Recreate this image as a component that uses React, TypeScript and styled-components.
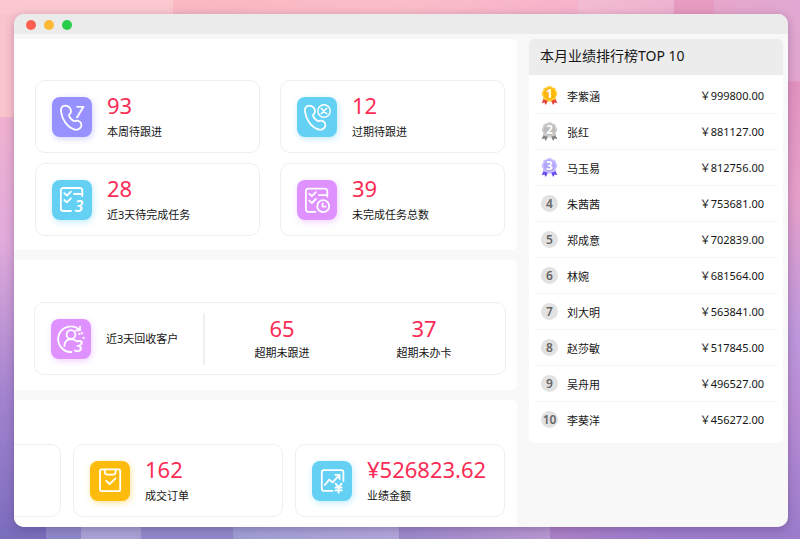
import React from "react";
import styled, { createGlobalStyle } from "styled-components";

const GlobalStyle = createGlobalStyle`
  * { box-sizing: border-box; }
  body {
    margin: 0;
    font-family: "Noto Sans", "Noto Sans CJK SC", sans-serif;
    color: #151515;
  }
  h2, p, ol, dl, dd, dt { margin: 0; padding: 0; font-weight: 400; }
`;

const Backdrop = styled.div`
  height: 100vh;
  min-height: 539px;
  display: flex;
  padding: 14px 12px 12px 14px;
  background:
    linear-gradient(90deg, #fbc8d0 0 21.6%, #f9b8c2 21.6%, #fabdc8 50%, #f6b3cb 72.2%, #f3bdd1 72.3%, #eeb2cf 84.2%, #e79bc0 84.3% 89.2%, #e6a6cb 89.3%, #e0a8d2) top / 100% 14px no-repeat,
    linear-gradient(90deg, #796ebc 0 5.7%, #8d88c9 5.8% 10.1%, #a9a2d6 10.2% 17.6%, #9088c8 17.7% 29.1%, #9e9ed3 29.2%, #b2a6da 49.8%, #9a88ca 49.9%, #b898d0 68.7%, #ab80c5 68.8%, #9d7dcc 82%, #9a7ccb) bottom / 100% 12px no-repeat,
    linear-gradient(180deg, #fac4cd 0 21.7%, #efb1cf 21.8%, #e0aadb 45%, #a283cf 74%, #7b6dbd) left / 50% 100% no-repeat,
    linear-gradient(180deg, #e0a8d2 0, #e2a6ce 15%, #e293c0 15.2%, #e5a0ca 37%, #bd98dc 62%, #b88cd4 76%, #9a7ccb) right / 50% 100% no-repeat;
`;

const Window = styled.main`
  flex: 1;
  min-width: 0;
  display: flex;
  flex-direction: column;
  overflow: hidden;
  border-radius: 10px;
  background: #f8f8f8;
  box-shadow: 0 2px 10px rgba(60, 30, 80, 0.3);
`;

const TitleBar = styled.header`
  flex: none;
  height: 20px;
  display: flex;
  align-items: center;
  gap: 8px;
  padding: 2px 12px 0;
  background: #ebebeb;
`;

const WindowDot = styled.button<{ $color: string }>`
  width: 10px;
  height: 10px;
  padding: 0;
  border: 0;
  border-radius: 50%;
  background: ${(p) => p.$color};
`;

const Content = styled.div`
  flex: 1;
  min-height: 0;
  display: flex;
  align-items: stretch;
  gap: 12px;
  padding: 5px 5px 0 0;
`;

const Sections = styled.div`
  flex: 1;
  min-width: 0;
  display: flex;
  flex-direction: column;
  gap: 10px;
`;

const Section = styled.section<{ $padding: string; $grow?: boolean }>`
  flex: ${(p) => (p.$grow ? "1" : "none")};
  padding: ${(p) => p.$padding};
  overflow: hidden;
  border-radius: 0 5px ${(p) => (p.$grow ? "0" : "5px")} 0;
  background: #fff;
`;

const CardGrid = styled.div`
  display: grid;
  grid-template-columns: 1fr 1fr;
  gap: 10px 20px;
`;

const CardStrip = styled.div`
  display: flex;
  justify-content: flex-end;
  gap: 12px;
`;

const Card = styled.article<{ $fixed?: boolean }>`
  ${(p) => (p.$fixed ? "flex: 0 0 210px;" : "")}
  height: 73px;
  display: flex;
  align-items: center;
  gap: 15px;
  padding: 0 0 0 16px;
  border: 1px solid #eeeeee;
  border-radius: 10px;
  background: #fff;
`;

const Tile = styled.span<{ $color: string }>`
  flex: none;
  width: 40px;
  height: 40px;
  border-radius: 8px;
  background: ${(p) => p.$color};
  box-shadow: 1px 2px 6px ${(p) => p.$color}66;
`;

const Glyph = styled.svg`
  display: block;
  width: 40px;
  height: 40px;
  fill: none;
  stroke: #fff;
  stroke-width: 1.8;
  stroke-linecap: round;
  stroke-linejoin: round;
  text {
    fill: #fff;
    stroke: none;
    font-family: "Noto Sans", sans-serif;
  }
`;

const Metric = styled.dl<{ $centered?: boolean }>`
  display: flex;
  flex-direction: column-reverse;
  ${(p) => (p.$centered ? "flex: 1; align-items: center;" : "gap: 2px;")}
`;

const Value = styled.dd`
  font-size: 22px;
  line-height: 28px;
  color: #fb2c55;
`;

const Label = styled.dt`
  font-size: 11px;
  line-height: 22px;
  white-space: nowrap;
`;

const RecycleLabel = styled.h2`
  flex: none;
  width: 97px;
  font-size: 11px;
  line-height: 16px;
`;

const RecycleMetrics = styled.div`
  flex: 1;
  display: flex;
  align-items: center;
  height: 52px;
  margin-left: -15px;
  padding: 0 10px 0 6px;
  border-left: 2px solid #f0f0f0;
`;

const Ranking = styled.aside`
  flex: none;
  align-self: flex-start;
  width: 254px;
  overflow: hidden;
  border-radius: 5px;
  background: #fff;
`;

const RankingTitle = styled.h2`
  padding: 0 11px;
  font-size: 14px;
  line-height: 34px;
  height: 36px;
  background: #ececec;
`;

const RankingList = styled.ol`
  list-style: none;
  padding: 3px 5px 5px 6px;
`;

const RankingRow = styled.li`
  height: 36px;
  display: flex;
  align-items: center;
  padding: 0 14px 0 6px;
  border-bottom: 1px solid #f5f5f5;
  font-size: 11px;
  &:last-child { border-bottom-color: transparent; }
`;

const RankBadge = styled.span`
  flex: none;
  width: 17px;
  height: 17px;
  border-radius: 50%;
  background: #e2e2e2;
  color: #666;
  font-size: 12px;
  font-weight: 600;
  line-height: 17px;
  text-align: center;
`;

const Medal = styled.svg`
  flex: none;
  width: 17px;
  height: 19px;
`;

const Person = styled.span`
  flex: 1;
  padding-left: 9px;
`;

const Amount = styled.span`
  padding-bottom: 2px;
`;

const CHECKS = "M12.3 13.2l2.6 2.4 4-4M12.3 20l2.6 2.4 4-4";
const HANDSET =
  "M13.2 8.6C10.2 8.6 8.6 10.8 9 14.5C9.8 21.5 14.6 29.6 21.5 32.2C24.8 33.4 28 32.4 29.2 29.4C30.2 26.6 28.2 24.4 25.6 23.6C24 23.2 23 24.6 21.8 24C19.4 22.8 17.6 20.4 17 18.4C16.8 17.2 18.8 16.6 19 14.8C19.2 11.4 16.6 8.6 13.2 8.6Z";

const WeekCallGlyph = () => (
  <Glyph viewBox="0 0 40 40" aria-hidden="true">
    <path d={HANDSET} />
    <text x="22.5" y="20.6" fontSize="17" fontStyle="italic" fontWeight="500">7</text>
  </Glyph>
);

const OverdueCallGlyph = () => (
  <Glyph viewBox="0 0 40 40" aria-hidden="true">
    <path d={HANDSET} transform="translate(-1 0)" />
    <circle cx="27" cy="14" r="6.2" strokeWidth="1.4" />
    <path d="M24.2 11.2l5.6 5.6M29.8 11.2l-5.6 5.6" strokeWidth="1.5" />
  </Glyph>
);

const TaskGlyph = () => (
  <Glyph viewBox="0 0 40 40" aria-hidden="true">
    <path d="M30.3 16V10.4A2.4 2.4 0 0 0 27.9 8H11.3A2.4 2.4 0 0 0 8.9 10.4V28.6A2.4 2.4 0 0 0 11.3 31H19" />
    <path d={CHECKS + "M22 14h7.5"} />
    <text x="22.5" y="31.5" fontSize="16" fontStyle="italic" fontWeight="600">3</text>
  </Glyph>
);

const TaskClockGlyph = () => (
  <Glyph viewBox="0 0 40 40" aria-hidden="true">
    <path d="M30.3 16.5V11A2.4 2.4 0 0 0 27.9 8.6H11.3A2.4 2.4 0 0 0 8.9 11V29.4A2.4 2.4 0 0 0 11.3 31.8H18.5" />
    <path d={CHECKS + "M22 14.5h7.5"} transform="translate(0 .6)" />
    <circle cx="26.2" cy="26.2" r="6" />
    <path d="M25.6 23.4v3.3h3" />
  </Glyph>
);

const CustomerGlyph = () => (
  <Glyph viewBox="0 0 40 40" aria-hidden="true">
    <path d="M20.5 33A12.8 12.8 0 1 1 28.2 10.4" />
    <path d="M29 7.6v3.8h-4" />
    <circle cx="20" cy="15.6" r="4.4" />
    <path d="M13.4 27C13.6 22.6 16.4 20.3 20 20.2C22 20.2 23.6 20.8 24.8 21.8" />
    <path d="M31 14.2v.1M32.6 18.8v.1M28.4 14.8v.1" strokeWidth="2.2" />
    <text x="23" y="32.6" fontSize="16" fontStyle="italic" fontWeight="600">3</text>
  </Glyph>
);

const OrderGlyph = () => (
  <Glyph viewBox="0 0 40 40" aria-hidden="true">
    <rect x="10" y="8.4" width="20.2" height="21.8" rx="1.6" />
    <path d="M14.8 8.6v2.6a2.4 2.4 0 0 0 2.4 2.4h6a2.4 2.4 0 0 0 2.4-2.4V8.6" />
    <path d="M16.2 19.8l3.4 3.2 6-5.6" />
  </Glyph>
);

const RevenueGlyph = () => (
  <Glyph viewBox="0 0 40 40" aria-hidden="true">
    <path d="M31.4 20V11.2A2 2 0 0 0 29.4 9.2H11.8A2 2 0 0 0 9.8 11.2V27.8A2 2 0 0 0 11.8 29.8H20.5" />
    <path d="M12.8 24l4.4-5.4 3.4 2.8 6.6-7.2M23.4 13.8h4.2v4.2" />
    <path d="M23.6 22.6l3 3.8 3-3.8M26.6 26.4v5.4M23.4 26.6h6.4M23.4 29.4h6.4" />
  </Glyph>
);

const MEDAL_COLORS = [
  { edge: "#ffcb2e", face: "#fdb70c", ribbon: "#e5453c" },
  { edge: "#cfcfcf", face: "#bcbcbc", ribbon: "#858585" },
  { edge: "#c6bdff", face: "#b0a4fc", ribbon: "#6a4df0" },
];
const SCALLOPS = Array.from({ length: 8 }, (_, i) => (i * Math.PI) / 4);

const RankMedal = ({ rank }: { rank: number }) => {
  const c = MEDAL_COLORS[rank - 1];
  return (
    <Medal viewBox="0 0 17 19" role="img" aria-label={`${rank}`}>
      <path d="M3.2 11.5L0.6 17.2L3.4 16.6L4.8 19L7.6 13.5Z M13.8 11.5L16.4 17.2L13.6 16.6L12.2 19L9.4 13.5Z" fill={c.ribbon} />
      {SCALLOPS.map((a) => (
        <circle key={a} cx={8.5 + 4.6 * Math.cos(a)} cy={7.8 + 4.6 * Math.sin(a)} r="3.1" fill={c.edge} />
      ))}
      <circle cx="8.5" cy="7.8" r="5.8" fill={c.face} />
      <text x="8.5" y="12" textAnchor="middle" fontSize="12" fontWeight="700" fill="#fff">{rank}</text>
    </Medal>
  );
};

type MetricCardProps = { color: string; glyph: React.ReactNode; value: string; label: string; fixed?: boolean };

const MetricCard = ({ color, glyph, value, label, fixed }: MetricCardProps) => (
  <Card $fixed={fixed}>
    <Tile $color={color}>{glyph}</Tile>
    <Metric>
      <Label>{label}</Label>
      <Value>{value}</Value>
    </Metric>
  </Card>
);

const PEOPLE: [string, string][] = [
  ["李紫涵", "999800.00"],
  ["张红", "881127.00"],
  ["马玉易", "812756.00"],
  ["朱茜茜", "753681.00"],
  ["郑成意", "702839.00"],
  ["林婉", "681564.00"],
  ["刘大明", "563841.00"],
  ["赵莎敏", "517845.00"],
  ["吴舟用", "496527.00"],
  ["李葵洋", "456272.00"],
];

const VIOLET = "#9791ff";
const SKY = "#63d0f4";
const ORCHID = "#df91ff";
const AMBER = "#fdbc0c";

export default function App() {
  return (
    <>
      <GlobalStyle />
      <Backdrop lang="zh-CN">
        <Window>
          <TitleBar>
            <WindowDot $color="#fc5f50" aria-label="关闭" />
            <WindowDot $color="#fdb934" aria-label="最小化" />
            <WindowDot $color="#29cd4a" aria-label="最大化" />
          </TitleBar>
          <Content>
            <Sections>
              <Section $padding="41px 12px 14px 21px">
                <CardGrid>
                  <MetricCard color={VIOLET} glyph={<WeekCallGlyph />} value="93" label="本周待跟进" />
                  <MetricCard color={SKY} glyph={<OverdueCallGlyph />} value="12" label="过期待跟进" />
                  <MetricCard color={SKY} glyph={<TaskGlyph />} value="28" label="近3天待完成任务" />
                  <MetricCard color={ORCHID} glyph={<TaskClockGlyph />} value="39" label="未完成任务总数" />
                </CardGrid>
              </Section>
              <Section $padding="42px 11px 15px 20px">
                <Card>
                  <Tile $color={ORCHID}><CustomerGlyph /></Tile>
                  <RecycleLabel>近3天回收客户</RecycleLabel>
                  <RecycleMetrics>
                    <Metric $centered>
                      <Label>超期未跟进</Label>
                      <Value>65</Value>
                    </Metric>
                    <Metric $centered>
                      <Label>超期未办卡</Label>
                      <Value>37</Value>
                    </Metric>
                  </RecycleMetrics>
                </Card>
              </Section>
              <Section $padding="44px 12px 10px 20px" $grow>
                <CardStrip>
                  <Card $fixed />
                  <MetricCard fixed color={AMBER} glyph={<OrderGlyph />} value="162" label="成交订单" />
                  <MetricCard fixed color={SKY} glyph={<RevenueGlyph />} value="¥526823.62" label="业绩金额" />
                </CardStrip>
              </Section>
            </Sections>
            <Ranking>
              <RankingTitle>本月业绩排行榜TOP 10</RankingTitle>
              <RankingList>
                {PEOPLE.map(([name, amount], i) => (
                  <RankingRow key={name}>
                    {i < 3 ? <RankMedal rank={i + 1} /> : <RankBadge>{i + 1}</RankBadge>}
                    <Person>{name}</Person>
                    <Amount>￥{amount}</Amount>
                  </RankingRow>
                ))}
              </RankingList>
            </Ranking>
          </Content>
        </Window>
      </Backdrop>
    </>
  );
}
